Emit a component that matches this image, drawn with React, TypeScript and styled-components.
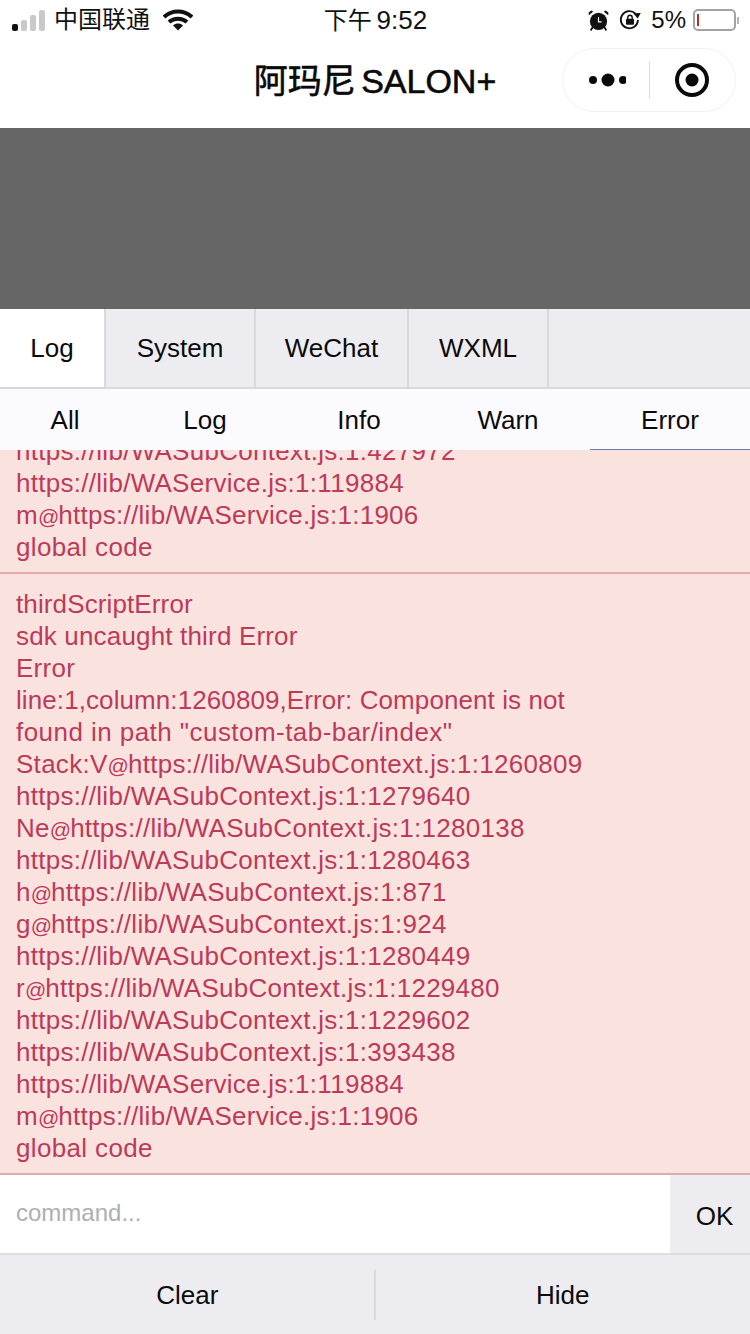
import React from 'react'
import styled, { createGlobalStyle } from 'styled-components'

const GlobalStyle = createGlobalStyle`
  html, body {
    margin: 0;
    padding: 0;
    background: #fff;
  }
  * {
    box-sizing: border-box;
  }
`

const firstBlock = [
  'https://lib/WASubContext.js:1:427972',
  'https://lib/WAService.js:1:119884',
  'm@https://lib/WAService.js:1:1906',
  'global code',
]

const secondBlock = [
  'thirdScriptError',
  'sdk uncaught third Error',
  'Error',
  'line:1,column:1260809,Error: Component is not',
  'found in path "custom-tab-bar/index"',
  'Stack:V@https://lib/WASubContext.js:1:1260809',
  'https://lib/WASubContext.js:1:1279640',
  'Ne@https://lib/WASubContext.js:1:1280138',
  'https://lib/WASubContext.js:1:1280463',
  'h@https://lib/WASubContext.js:1:871',
  'g@https://lib/WASubContext.js:1:924',
  'https://lib/WASubContext.js:1:1280449',
  'r@https://lib/WASubContext.js:1:1229480',
  'https://lib/WASubContext.js:1:1229602',
  'https://lib/WASubContext.js:1:393438',
  'https://lib/WAService.js:1:119884',
  'm@https://lib/WAService.js:1:1906',
  'global code',
]

const lineTracking: Record<string, number> = {
  thirdScriptError: 0.12,
  'sdk uncaught third Error': 0.17,
  'line:1,column:1260809,Error: Component is not': 0.09,
  'found in path "custom-tab-bar/index"': 0.45,
  'global code': 0.35,
}

// the @ of the reference font is a lot narrower than the Liberation one
function renderLine(line: string) {
  const at = line.indexOf('@')
  if (at < 0) return line
  return (
    <>
      {line.slice(0, at)}
      <At>@</At>
      {line.slice(at + 1)}
    </>
  )
}

function App() {
  return (
    <Page>
      <GlobalStyle />
      <StatusBar>
        <StatusLeft>
          <Signal>
            <SignalBar $h={7} $on />
            <SignalBar $h={11} />
            <SignalBar $h={16} />
            <SignalBar $h={21} />
          </Signal>
          <Carrier>中国联通</Carrier>
          <svg width="30" height="22" viewBox="0 0 30 22">
            <path d="M1 8 C9 0.5 21 0.5 29 8" fill="none" stroke="#111" strokeWidth="4" />
            <path d="M6 13 C11 8.5 19 8.5 24 13" fill="none" stroke="#111" strokeWidth="4" />
            <path d="M10 16.4 C13.2 14 16.8 14 20 16.4 L15 21.5 Z" fill="#111" />
          </svg>
        </StatusLeft>
        <Clock>
          下午 <ClockDigits>9:52</ClockDigits>
        </Clock>
        <StatusRight>
          <StatusIcons>
            <svg width="21" height="21" viewBox="0 0 24 24">
              <circle cx="12" cy="13" r="9.8" fill="#111" />
              <path d="M12 8 V13.5 H15.5" fill="none" stroke="#fff" strokeWidth="1.3" />
              <path d="M1 6 L6 1.6 L3.6 0.6 L0.6 3.2 Z M23 6 L18 1.6 L20.4 0.6 L23.4 3.2 Z" fill="#111" />
              <path d="M5.5 19.5 L3 23.4 M18.5 19.5 L21 23.4" stroke="#111" strokeWidth="2" />
            </svg>
            <svg width="24" height="24" viewBox="0 0 24 24">
              <path d="M20 12 A8.6 8.6 0 1 1 17.5 5.6" fill="none" stroke="#111" strokeWidth="1.8" />
              <path d="M15.2 6.4 L22 3.2 L21.2 9.6 Z" fill="#111" transform="rotate(22 18 6)" />
              <rect x="8" y="10.8" width="8" height="6" rx="1" fill="#111" />
              <path d="M9.8 11 V9.4 A2.2 2.2 0 0 1 14.2 9.4 V11" fill="none" stroke="#111" strokeWidth="1.4" />
            </svg>
          </StatusIcons>
          <Percent>5%</Percent>
          <Battery>
            <BatteryLevel />
          </Battery>
          <BatteryCap />
        </StatusRight>
      </StatusBar>

      <NavBar>
        <Title>阿玛尼 SALON+</Title>
        <Capsule>
          <CapsuleSide>
            <svg width="40" height="16" viewBox="-2 0 40 16">
              <circle cx="5" cy="8" r="4" fill="#0a0a0a" />
              <circle cx="20" cy="8" r="6.5" fill="#0a0a0a" />
              <circle cx="35" cy="8" r="4" fill="#0a0a0a" />
            </svg>
          </CapsuleSide>
          <CapsuleDivider />
          <CapsuleSide>
            <svg width="36" height="36" viewBox="0 0 36 36">
              <circle cx="18" cy="18" r="15" fill="none" stroke="#0a0a0a" strokeWidth="4" />
              <circle cx="18" cy="18" r="6.5" fill="#0a0a0a" />
            </svg>
          </CapsuleSide>
        </Capsule>
      </NavBar>

      <Backdrop />

      <Tabs>
        <Tab $active $w={106}>Log</Tab>
        <Tab $w={150}>System</Tab>
        <Tab $w={153}>WeChat</Tab>
        <Tab $w={140}>WXML</Tab>
      </Tabs>

      <SubTabs>
        <SubTab>All</SubTab>
        <SubTab>Log</SubTab>
        <SubTab>Info</SubTab>
        <SubTab $endGap={12}>Warn</SubTab>
        <SubTab $active>Error</SubTab>
      </SubTabs>

      <LogList>
        <LogBlock>
          {firstBlock.map(line => (
            <LogLine key={line} $tracking={lineTracking[line] ?? 0.28}>
              {renderLine(line)}
            </LogLine>
          ))}
        </LogBlock>
        <LogBlock>
          {secondBlock.map((line, i) => (
            <LogLine key={i} $tracking={lineTracking[line] ?? 0.28}>
              {renderLine(line)}
            </LogLine>
          ))}
        </LogBlock>
      </LogList>

      <CommandRow>
        <CommandInput placeholder="command..." />
        <OkButton>OK</OkButton>
      </CommandRow>

      <Footer>
        <FooterButton>Clear</FooterButton>
        <FooterDivider />
        <FooterButton>Hide</FooterButton>
      </Footer>
    </Page>
  )
}

export default App

const Page = styled.div`
  width: 750px;
  height: 1334px;
  display: flex;
  flex-direction: column;
  overflow: hidden;
  background: #fff;
  color: #0a0a0a;
  font-family: 'Liberation Sans', 'Noto Sans CJK SC', sans-serif;
`

const StatusBar = styled.div`
  height: 40px;
  flex: none;
  display: grid;
  grid-template-columns: 1fr auto 1fr;
  align-items: center;
  padding: 0 11px 0 12px;
  color: #111;
`

const StatusLeft = styled.div`
  display: flex;
  align-items: center;
  gap: 9px;
`

const Signal = styled.div`
  display: flex;
  align-items: flex-end;
  gap: 3px;
  height: 21px;
`

const SignalBar = styled.span<{ $h: number; $on?: boolean }>`
  width: 6px;
  height: ${props => props.$h}px;
  border-radius: 2px;
  background: ${props => (props.$on ? '#111' : '#c9c9c9')};
`

const Carrier = styled.span`
  font-size: 24px;
  line-height: 24px;
  margin: 0 4px 1px 0;
`

const Clock = styled.span`
  font-size: 24px;
  line-height: 24px;
  word-spacing: -2px;
  margin-top: 1px;
`

const ClockDigits = styled.span`
  font-size: 26px;
`

const StatusRight = styled.div`
  display: flex;
  align-items: center;
  justify-content: flex-end;
  gap: 6px;
`

const StatusIcons = styled.div`
  display: flex;
  align-items: center;
  gap: 9px;
  margin-right: 3px;
`

const Percent = styled.span`
  font-size: 24px;
`

const Battery = styled.div`
  width: 43px;
  height: 22px;
  border: 2px solid #a3a3a3;
  border-radius: 5px;
  padding: 3px 2px;
  margin: 0 -5px 1px 1px;
`

const BatteryLevel = styled.div`
  width: 2px;
  height: 100%;
  background: #b8302c;
`

const BatteryCap = styled.div`
  width: 2px;
  height: 7px;
  background: #b5b5b5;
`

const NavBar = styled.div`
  height: 88px;
  flex: none;
  position: relative;
  display: flex;
  align-items: center;
  justify-content: center;
`

const Title = styled.h1`
  margin: 0 0 6px;
  font-size: 34px;
  line-height: 44px;
  font-weight: 400;
  word-spacing: -4px;
  -webkit-text-stroke: 0.6px #0a0a0a;
`

const Capsule = styled.div`
  position: absolute;
  left: 562px;
  top: 8px;
  width: 174px;
  height: 64px;
  display: flex;
  align-items: center;
  border: 1px solid #f1f1f1;
  border-radius: 32px;
`

const CapsuleSide = styled.div`
  flex: 1;
  display: flex;
  justify-content: center;
  align-items: center;
`

const CapsuleDivider = styled.div`
  width: 1px;
  height: 38px;
  background: #dcdcdc;
`

const Backdrop = styled.div`
  height: 181px;
  flex: none;
  background: #666;
`

const Tabs = styled.div`
  height: 80px;
  flex: none;
  display: flex;
  background: #ededf1;
  border-bottom: 2px solid #d9d9dc;
`

const Tab = styled.div<{ $active?: boolean; $w: number }>`
  width: ${props => props.$w}px;
  display: flex;
  align-items: center;
  justify-content: center;
  font-size: 26px;
  background: ${props => (props.$active ? '#fff' : 'transparent')};
  border-right: 2px solid #d9d9dc;
`

const SubTabs = styled.div`
  height: 61px;
  flex: none;
  display: grid;
  grid-template-columns: 130px 150px 158px 152px 160px;
  background: #fbfafe;
`

const SubTab = styled.div<{ $active?: boolean; $endGap?: number }>`
  display: flex;
  align-items: center;
  justify-content: center;
  font-size: 26px;
  padding: 2px ${props => props.$endGap ?? 0}px 0 0;
  border-bottom: 1px solid ${props => (props.$active ? '#6a7fa5' : 'transparent')};
`

const LogList = styled.div`
  height: 725px;
  flex: none;
  display: flex;
  flex-direction: column;
  justify-content: flex-end;
  overflow: hidden;
  background: #fae3df;
  border-bottom: 2px solid #d9aeb0;
`

const LogBlock = styled.div`
  flex: none;
  padding: 14px 16px 9px;
  border-bottom: 2px solid #e3a9ab;
  font-size: 26px;
  line-height: 32px;
  color: #bd3a58;

  &:last-child {
    border-bottom: 0;
  }
`

const LogLine = styled.div<{ $tracking: number }>`
  letter-spacing: ${props => props.$tracking}px;
  white-space: nowrap;
`

const At = styled.span`
  font-size: 21px;
  line-height: 0;
  letter-spacing: -1px;
`

const CommandRow = styled.div`
  height: 80px;
  flex: none;
  display: flex;
  border-bottom: 2px solid #dededf;
`

const CommandInput = styled.input`
  flex: 1;
  min-width: 0;
  height: 76px;
  padding: 0 16px;
  border: 0;
  outline: 0;
  background: #fff;
  font-family: inherit;
  font-size: 24px;

  &::placeholder {
    color: #aeaeb3;
    opacity: 1;
  }
`

const OkButton = styled.div`
  width: 80px;
  display: flex;
  align-items: center;
  justify-content: center;
  padding: 4px 0 0 9px;
  font-size: 26px;
  background: #ededf1;
`

const Footer = styled.div`
  flex: 1;
  display: flex;
  align-items: center;
  padding-top: 1px;
  background: #ededf1;
`

const FooterButton = styled.div`
  flex: 1;
  text-align: center;
  font-size: 26px;
`

const FooterDivider = styled.div`
  width: 2px;
  height: 50px;
  margin-left: -1px;
  background: #d9d9dc;
`
